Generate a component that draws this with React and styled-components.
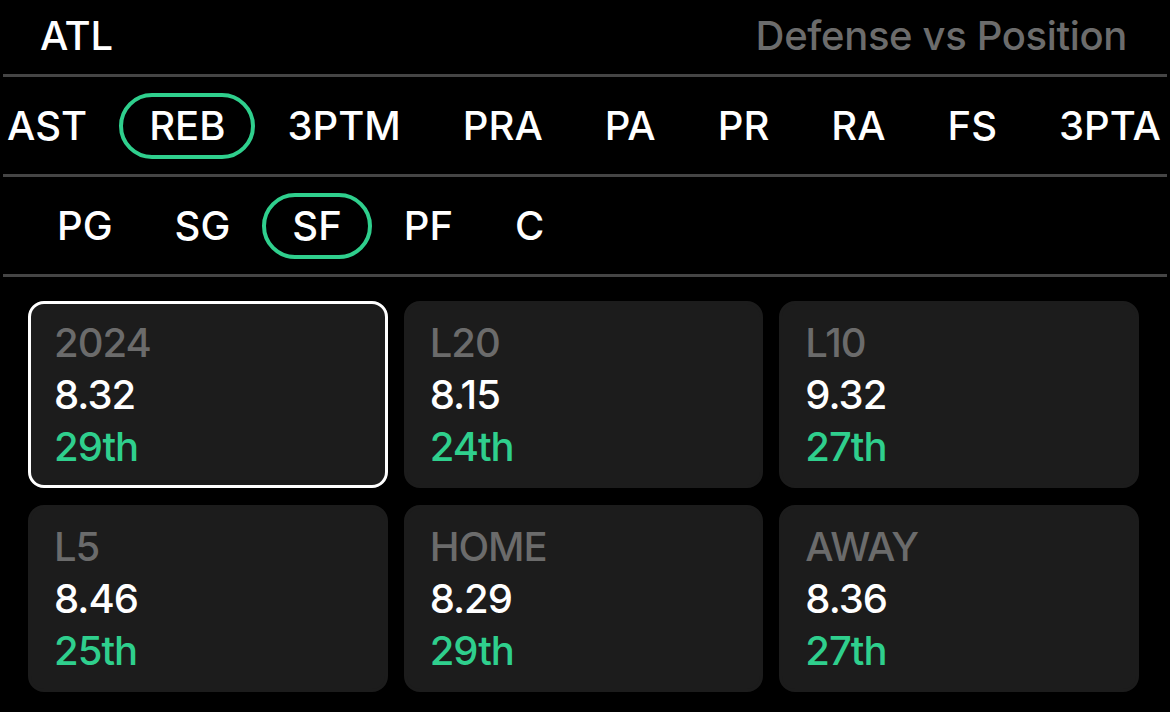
import React, { useState } from "react";
import styled, { createGlobalStyle } from "styled-components";

const STATS = ["AST", "REB", "3PTM", "PRA", "PA", "PR", "RA", "FS", "3PTA"];
const POSITIONS = ["PG", "SG", "SF", "PF", "C"];

const SPLITS = [
  { label: "2024", value: "8.32", rank: "29th" },
  { label: "L20", value: "8.15", rank: "24th" },
  { label: "L10", value: "9.32", rank: "27th" },
  { label: "L5", value: "8.46", rank: "25th" },
  { label: "HOME", value: "8.29", rank: "29th" },
  { label: "AWAY", value: "8.36", rank: "27th" },
];

const App = () => {
  const [stat, setStat] = useState("REB");
  const [position, setPosition] = useState("SF");
  const [split, setSplit] = useState("2024");

  return (
    <>
      <GlobalStyle />
      <Page>
        <Header>
          <Team>ATL</Team>
          <Title>Defense vs Position</Title>
        </Header>
        <Divider />

        <TabRow>
          <TabStrip offset={-23}>
            {STATS.map((s) => (
              <Tab key={s} active={s === stat} onClick={() => setStat(s)}>
                {s}
              </Tab>
            ))}
          </TabStrip>
        </TabRow>
        <Divider />

        <TabRow>
          <TabStrip offset={27}>
            {POSITIONS.map((p) => (
              <Tab key={p} active={p === position} onClick={() => setPosition(p)}>
                {p}
              </Tab>
            ))}
          </TabStrip>
        </TabRow>
        <Divider />

        <Grid>
          {SPLITS.map((item) => (
            <Card key={item.label} selected={item.label === split} onClick={() => setSplit(item.label)}>
              <CardLabel>{item.label}</CardLabel>
              <CardValue>{item.value}</CardValue>
              <CardRank>{item.rank}</CardRank>
            </Card>
          ))}
        </Grid>
      </Page>
    </>
  );
};

const GlobalStyle = createGlobalStyle`
  html, body {
    margin: 0;
    padding: 0;
    background: #000000;
  }
  body {
    font-family: Inter, "Noto Sans", "Liberation Sans", sans-serif;
    -webkit-font-smoothing: antialiased;
  }
`;

const Page = styled.div`
  width: 1170px;
  height: 712px;
  background: #000000;
  overflow: hidden;
  color: #ffffff;
`;

const Header = styled.div`
  height: 74px;
  box-sizing: border-box;
  display: flex;
  align-items: center;
  justify-content: space-between;
  padding: 0 43px 4px 40px;
`;

const Team = styled.div`
  font-size: 40px;
  font-weight: 500;
  letter-spacing: -0.3px;
  color: #ffffff;
`;

const Title = styled.div`
  font-size: 40px;
  font-weight: 500;
  letter-spacing: -0.35px;
  color: #6c6c6c;
`;

const Divider = styled.div`
  height: 3px;
  margin: 0 3px;
  background: #454545;
`;

const TabRow = styled.div`
  height: 97px;
  display: flex;
  align-items: center;
  overflow: hidden;
`;

const TabStrip = styled.div`
  display: flex;
  align-items: center;
  gap: 2px;
  margin-left: ${(props) => props.offset}px;
  white-space: nowrap;
`;

const Tab = styled.div`
  height: 66px;
  box-sizing: border-box;
  display: flex;
  align-items: center;
  padding: 0 26px;
  border: 4px solid ${(props) => (props.active ? "#2fcf8d" : "transparent")};
  border-radius: 33px;
  font-size: 40px;
  font-weight: 500;
  color: #ffffff;
  cursor: pointer;
`;

const Grid = styled.div`
  display: grid;
  grid-template-columns: repeat(3, 1fr);
  column-gap: 16px;
  row-gap: 17px;
  padding: 24px 31px 0 28px;
`;

const Card = styled.div`
  height: 187px;
  box-sizing: border-box;
  padding: 13px 23px 0;
  background: #1c1c1c;
  border: 3px solid ${(props) => (props.selected ? "#ffffff" : "#1c1c1c")};
  border-radius: 16px;
  display: flex;
  flex-direction: column;
  cursor: pointer;
`;

const CardLabel = styled.div`
  font-size: 40px;
  line-height: 52px;
  font-weight: 500;
  letter-spacing: -1px;
  color: #6b6b6b;
`;

const CardValue = styled(CardLabel)`
  color: #ffffff;
`;

const CardRank = styled(CardLabel)`
  color: #2fcf8d;
`;

export default App;
